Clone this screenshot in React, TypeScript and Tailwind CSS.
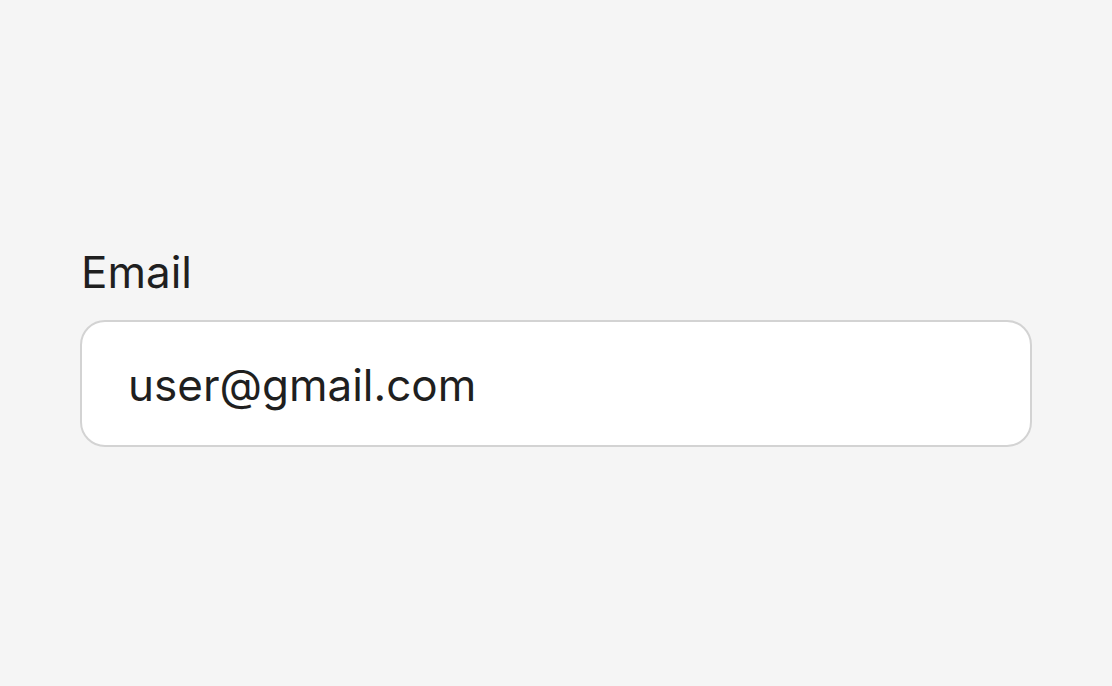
import React from "react";

export default function App() {
  return (
    <div
      className="w-[1112px] h-[686px] bg-[#f5f5f5] flex flex-col pl-[80px] pt-[248px]"
      style={{ fontFamily: "Inter, 'Noto Sans', sans-serif" }}
    >
      <label className="pl-[1px] text-[44px] leading-[48px] text-[#1f1f1f]">Email</label>
      <div className="mt-[24px] h-[127px] w-[952px] rounded-[25px] border-[2.5px] border-[#d3d3d3] bg-white flex items-center pl-[46px] pt-[2px]">
        <span className="text-[44px] text-[#1f1f1f]">user@gmail.com</span>
      </div>
    </div>
  );
}
